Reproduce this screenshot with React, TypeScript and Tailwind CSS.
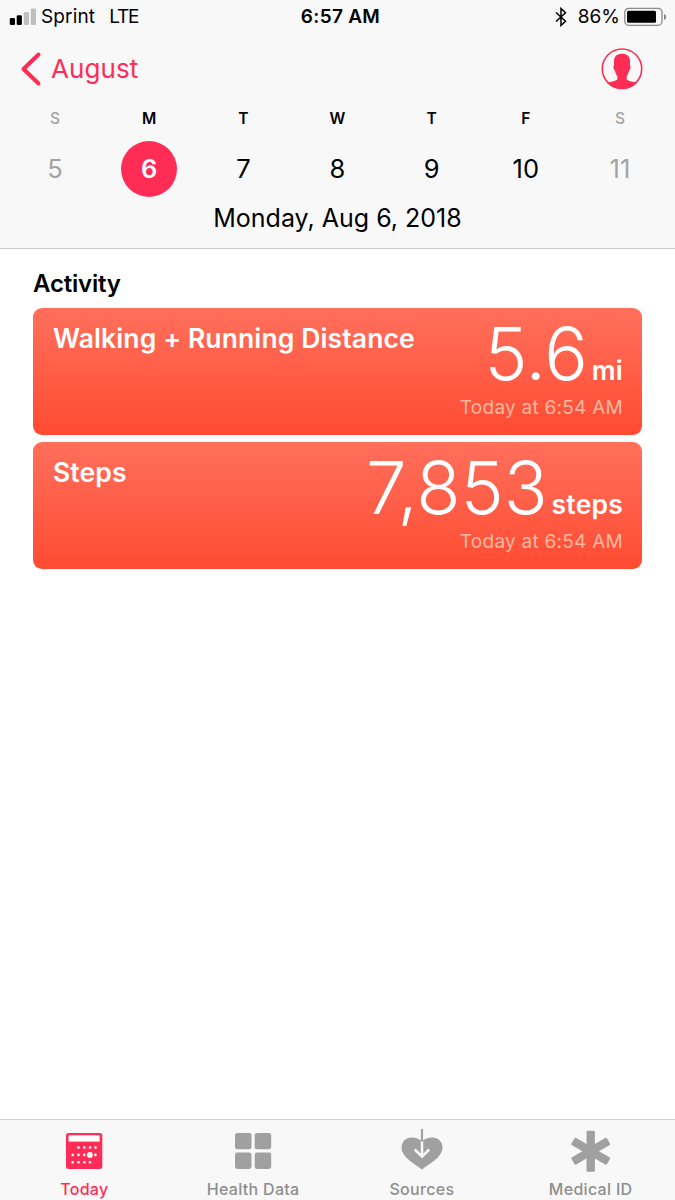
import { ReactNode } from 'react';
import clsx from 'clsx';

type Day = {
  letter: string;
  date: number;
  weekend?: boolean;
  selected?: boolean;
};

const DAYS: Day[] = [
  { letter: 'S', date: 5, weekend: true },
  { letter: 'M', date: 6, selected: true },
  { letter: 'T', date: 7 },
  { letter: 'W', date: 8 },
  { letter: 'T', date: 9 },
  { letter: 'F', date: 10 },
  { letter: 'S', date: 11, weekend: true },
];

function StatusBar() {
  return (
    <div className="grid h-[34px] grid-cols-3 items-center text-[19px]">
      <div className="flex items-center pl-[9px]">
        <svg width="27" height="18" viewBox="0 0 27 18" className="mr-[5px]">
          <rect x="0.8" y="10" width="5.2" height="7" rx="1.3" fill="#000" />
          <rect x="7.7" y="7.2" width="5.2" height="9.8" rx="1.3" fill="#000" />
          <rect x="14.8" y="4" width="5.2" height="13" rx="1.3" fill="#bfbfbf" />
          <rect x="21.8" y="0.5" width="5.2" height="16.5" rx="1.3" fill="#bfbfbf" />
        </svg>
        <span className="pt-px tracking-[0.15px]">Sprint</span>
        <span className="ml-[14px] pt-px tracking-[-1.2px]">LTE</span>
      </div>
      <div className="pt-px pl-[6px] text-center font-semibold tracking-[0.3px]">6:57 AM</div>
      <div className="flex items-center justify-end pr-[8px]">
        <svg width="14" height="20" viewBox="0 0 14 20" className="mr-[10px]" fill="none" stroke="#000" strokeWidth="1.5">
          <path d="M2 5.5 11.5 14.3 7 18.5V1.5l4.5 4.2L2 14.5" />
        </svg>
        <span className="pt-px">86%</span>
        <svg width="43" height="20" viewBox="0 0 43 20" className="ml-[4px]">
          <rect x="0.8" y="1.3" width="37.2" height="17" rx="4" fill="none" stroke="#8a8a8a" strokeWidth="1.3" />
          <rect x="3" y="3.8" width="29" height="12" rx="1.5" fill="#000" />
          <path d="M40 7v6c1.6-.5 2.2-1.7 2.2-3S41.6 7.5 40 7z" fill="#8a8a8a" />
        </svg>
      </div>
    </div>
  );
}

function NavBar() {
  return (
    <div className="flex h-[70px] items-center justify-between pr-[32px] pl-[20px] text-[#ff2d55]">
      <button className="flex items-center">
        <svg width="23" height="36" viewBox="0 0 23 36" fill="none" stroke="currentColor" strokeWidth="4" strokeLinecap="round" strokeLinejoin="round">
          <path d="M18.5 3.5 3.5 18l15 14.5" />
        </svg>
        <span className="ml-[8px] pb-[2px] text-[26px] tracking-[0.1px]">August</span>
      </button>
      <svg width="42" height="42" viewBox="0 0 42 42">
        <circle cx="21" cy="20.7" r="19.7" fill="none" stroke="currentColor" strokeWidth="1.6" />
        <path
          fill="currentColor"
          d="M21 5.8C16.500 5.800 13 8 13 13v4.500C12 17.800 12.400 21.800 14 22.500C14.300 25 15.200 26.700 16.300 28V31.500C14.500 33.300 10 33.700 6 34.700C9.500 38.500 15 41 21 41C27 41 32.500 38.500 36 34.700C32 33.700 27.500 33.300 25.700 31.500V28C26.800 26.700 27.700 25 28 22.500C29.600 21.800 30 17.800 29 17.500V13C29 8 25.500 5.800 21 5.800z"
        />
      </svg>
    </div>
  );
}

function WeekStrip() {
  return (
    <div className="grid grid-cols-7 px-[8px]">
      {DAYS.map((day) => (
        <div
          key={day.date}
          className={clsx('flex flex-col items-center', day.weekend && 'text-[#a3a3a3]')}
        >
          <span className={clsx('h-[28px] text-[15.5px] leading-[29px]', day.weekend ? 'font-[450]' : 'font-semibold')}>
            {day.letter}
          </span>
          <span
            className={clsx(
              'mt-[9px] flex size-[56px] items-center justify-center rounded-full text-[25.5px]',
              day.selected && 'bg-[#ff2d55] font-semibold text-white'
            )}
          >
            {day.date}
          </span>
        </div>
      ))}
    </div>
  );
}

type CardProps = {
  title: string;
  value: string;
  unit: string;
  time: string;
};

function ActivityCard({ title, value, unit, time }: CardProps) {
  return (
    <div className="flex h-[127px] justify-between rounded-[9px] bg-gradient-to-b from-[#ff6f5b] to-[#ff4a31] pr-[19px] pl-[20px] text-white">
      <h3 className="pt-[12px] text-[26.5px] leading-[36px] font-semibold tracking-[0.12px]">{title}</h3>
      <div className="flex flex-col items-end">
        <div className="flex items-baseline pt-[6px] leading-[80px]">
          <span className="text-[72.5px] font-light">{value}</span>
          <span className="ml-[4px] text-[26.5px] leading-none font-semibold tracking-[0.2px]">{unit}</span>
        </div>
        <span className="text-[19px] leading-[28px] tracking-[0.25px] text-[#ffb9a0]">{time}</span>
      </div>
    </div>
  );
}

function Tab({ label, active, children }: { label: string; active?: boolean; children: ReactNode }) {
  return (
    <button className={clsx('flex flex-1 flex-col items-center', active ? 'text-[#ff2d55]' : 'text-[#a0a0a0]')}>
      <svg width="44" height="44" viewBox="0 0 44 44" className="mt-[9px] shrink-0">
        {children}
      </svg>
      <span className={clsx('mt-[5px] text-[16px] leading-[22px] font-medium tracking-[0.3px]', !active && 'text-[#8e8e8e]')}>{label}</span>
    </button>
  );
}

// x, y of each dot on the calendar icon
const DOTS = [
  [16.5, 18.5], [22.3, 18.5], [28, 18.5], [33.5, 18.5],
  [10.7, 25.9], [16.5, 25.9], [22.3, 25.9], [33.5, 25.9],
  [10.7, 33.2], [16.5, 33.2], [22.3, 33.2], [28, 33.2],
];

function TabBar() {
  return (
    <nav className="flex h-[81px] border-t border-[#d2d2d2] bg-[#f8f8f8]">
      <Tab label="Today" active>
        <rect x="4" y="4" width="36.3" height="36" rx="2.5" fill="currentColor" />
        <rect x="6.6" y="6.3" width="31" height="6.3" fill="#fff" />
        {DOTS.map(([x, y]) => (
          <circle key={`${x}-${y}`} cx={x} cy={y} r="1.3" fill="#fff" />
        ))}
        <circle cx="27.9" cy="25.9" r="2.9" fill="#fff" />
      </Tab>
      <Tab label="Health Data">
        <rect x="4" y="4" width="16.5" height="16.3" rx="2.3" fill="currentColor" />
        <rect x="23.7" y="4" width="16.5" height="16.3" rx="2.3" fill="currentColor" />
        <rect x="4" y="23.6" width="16.5" height="16.3" rx="2.3" fill="currentColor" />
        <rect x="23.7" y="23.6" width="16.5" height="16.3" rx="2.3" fill="currentColor" />
      </Tab>
      <Tab label="Sources">
        <path
          fill="currentColor"
          d="M22 40.5C17 36 1.5 29 1.5 18.5 1.5 12.5 6 8.5 11.5 8.5c4.5 0 8 1.5 10.5 4 2.5-2.5 6-4 10.5-4 5.5 0 10 4 10 10C42.5 29 27 36 22 40.5z"
        />
        <path d="M22 12v15M14.8 20.5l7.2 7.2 7.2-7.2" fill="none" stroke="#f8f8f8" strokeWidth="2.5" />
        <path d="M22 0v12.5" stroke="currentColor" strokeWidth="2.2" />
      </Tab>
      <Tab label="Medical ID">
        <g fill="currentColor">
          <rect x="17.5" y="1.7" width="8.4" height="41" rx="1.3" />
          <rect x="17.5" y="1.7" width="8.4" height="41" rx="1.3" transform="rotate(60 21.7 22.2)" />
          <rect x="17.5" y="1.7" width="8.4" height="41" rx="1.3" transform="rotate(-60 21.7 22.2)" />
        </g>
      </Tab>
    </nav>
  );
}

export default function App() {
  return (
    <div className="flex h-[1200px] w-[675px] flex-col bg-white font-['Inter',sans-serif] text-black">
      <header className="h-[249px] border-b border-[#cfcfcf] bg-[#f8f8f8]">
        <StatusBar />
        <NavBar />
        <WeekStrip />
        <p className="text-center text-[25px] leading-[43px]">Monday, Aug 6, 2018</p>
      </header>
      <main className="flex-1 px-[33px] pt-[19px]">
        <h2 className="text-[24px] leading-[32px] font-semibold tracking-[-0.2px]">Activity</h2>
        <div className="mt-[8px] flex flex-col gap-[7px]">
          <ActivityCard title="Walking + Running Distance" value="5.6" unit="mi" time="Today at 6:54 AM" />
          <ActivityCard title="Steps" value="7,853" unit="steps" time="Today at 6:54 AM" />
        </div>
      </main>
      <TabBar />
    </div>
  );
}
